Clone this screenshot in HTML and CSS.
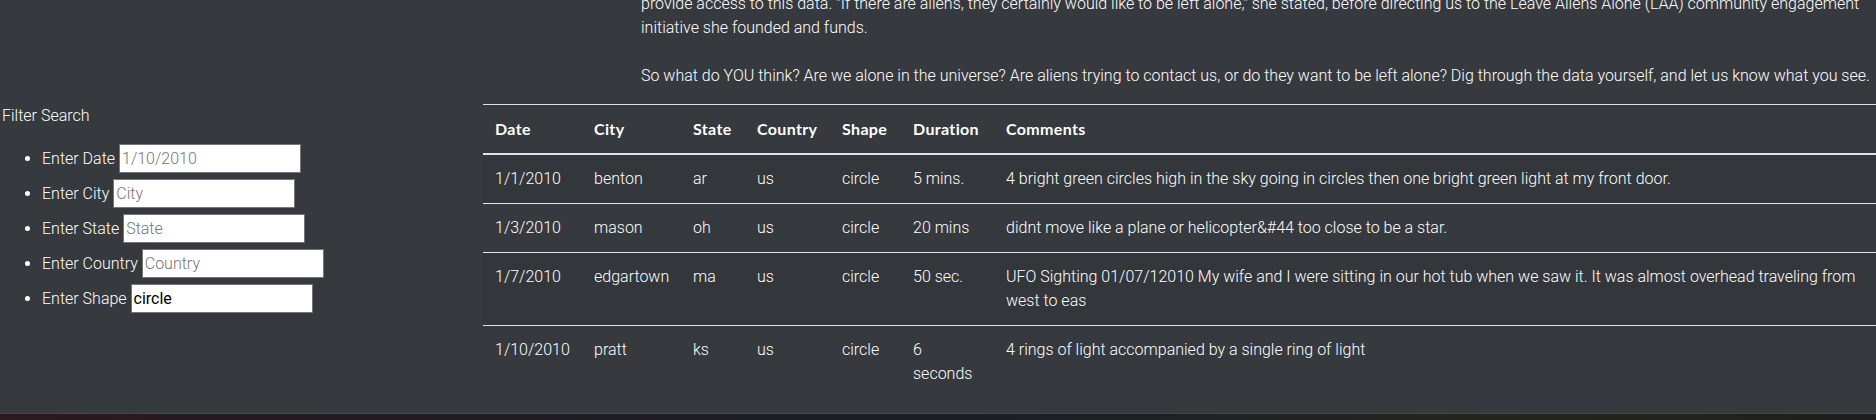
FILE: index.html
```html
<!DOCTYPE html>
<html lang="en">
<head>
<meta charset="utf-8">
<title>UFO Sightings</title>
<link rel="stylesheet" href="styles.css">
</head>
<body>
<div class="page">
  <section class="intro">
    <p class="intro-p">provide access to this data. "If there are aliens, they certainly would like to be left alone," she stated, before directing us to the Leave Aliens Alone (LAA) community engagement<br>initiative she founded and funds.</p>
    <p class="intro-p">So what do YOU think? Are we alone in the universe? Are aliens trying to contact us, or do they want to be left alone? Dig through the data yourself, and let us know what you see.</p>
  </section>
  <div class="main">
    <aside class="filters">
      <div class="filters-title">Filter Search</div>
      <ul class="filter-list">
        <li><label for="datetime">Enter Date</label> <input class="field" id="datetime" type="text" placeholder="1/10/2010"></li>
        <li><label for="city">Enter City</label> <input class="field" id="city" type="text" placeholder="City"></li>
        <li><label for="state">Enter State</label> <input class="field" id="state" type="text" placeholder="State"></li>
        <li><label for="country">Enter Country</label> <input class="field" id="country" type="text" placeholder="Country"></li>
        <li><label for="shape">Enter Shape</label> <input class="field" id="shape" type="text" value="circle"></li>
      </ul>
    </aside>
    <section class="results">
      <table class="ufo-table">
        <colgroup>
          <col class="c-date"><col class="c-city"><col class="c-state"><col class="c-country"><col class="c-shape"><col class="c-duration"><col>
        </colgroup>
        <thead>
          <tr><th>Date</th><th>City</th><th>State</th><th>Country</th><th>Shape</th><th>Duration</th><th>Comments</th></tr>
        </thead>
        <tbody>
          <tr><td>1/1/2010</td><td>benton</td><td>ar</td><td>us</td><td>circle</td><td>5 mins.</td><td>4 bright green circles high in the sky going in circles then one bright green light at my front door.</td></tr>
          <tr><td>1/3/2010</td><td>mason</td><td>oh</td><td>us</td><td>circle</td><td>20 mins</td><td>didnt move like a plane or helicopter&amp;#44 too close to be a star.</td></tr>
          <tr><td>1/7/2010</td><td>edgartown</td><td>ma</td><td>us</td><td>circle</td><td>50 sec.</td><td>UFO Sighting 01/07/12010 My wife and I were sitting in our hot tub when we saw it. It was almost overhead traveling from<br>west to eas</td></tr>
          <tr><td>1/10/2010</td><td>pratt</td><td>ks</td><td>us</td><td>circle</td><td>6<br>seconds</td><td>4 rings of light accompanied by a single ring of light</td></tr>
        </tbody>
      </table>
    </section>
  </div>
</div>
<div class="backdrop"></div>
</body>
</html>
```
FILE: styles.css
```css
html, body {
  margin: 0;
  padding: 0;
}
body {
  height: 420px;
  overflow: hidden;
  background: #1c1d21;
  font-family: Roboto, "Liberation Sans", sans-serif;
  font-weight: 300;
  font-size: 16px;
  line-height: 1.5;
  color: #fff;
}
.page {
  background: #36393e;
  height: 413px;
  overflow: hidden;
}
.intro {
  margin: -8px 0 0 641px;
}
.intro-p {
  margin: 0 0 24px;
  white-space: nowrap;
}
.intro-p:last-child {
  margin-bottom: 16px;
}
.main {
  display: grid;
  grid-template-columns: 483px 1fr;
}
.filters {
  padding-left: 2px;
}
.filters-title {
  line-height: 24px;
}
.filter-list {
  margin: 16px 0 0;
  padding-left: 40px;
  list-style: disc;
}
.filter-list li {
  height: 29px;
  line-height: 29px;
  margin-bottom: 6px;
}
.field {
  box-sizing: border-box;
  width: 182px;
  height: 29px;
  margin: 0;
  padding: 1px 2px;
  border: 1px solid #767676;
  background: #fff;
  color: #000;
  font-family: Roboto, "Liberation Sans", sans-serif;
  font-weight: 400;
  font-size: 16px;
  vertical-align: top;
}
.field::placeholder {
  color: #757575;
  font-weight: 300;
}
.ufo-table {
  width: 1393px;
  table-layout: fixed;
  border-collapse: collapse;
  margin-bottom: 16px;
}
.c-date { width: 99px; }
.c-city { width: 99px; }
.c-state { width: 64px; }
.c-country { width: 85px; }
.c-shape { width: 71px; }
.c-duration { width: 93px; }
.ufo-table th,
.ufo-table td {
  padding: 12px;
  text-align: left;
  vertical-align: top;
  border-top: 1px solid #dee2e6;
  white-space: nowrap;
}
.ufo-table th {
  font-family: Lato, Roboto, sans-serif;
  font-weight: 700;
  letter-spacing: 0.35px;
  border-bottom: 2px solid #dee2e6;
}
.ufo-table tbody tr:nth-child(odd) {
  background: rgba(0, 0, 0, 0.05);
}
.backdrop {
  height: 6px;
  border-top: 1px solid #44474c;
  background: linear-gradient(90deg, #2c1a1f 0%, #231c22 20%, #1d1f26 45%, #1f2024 60%, #25251f 80%, #1e1f1c 100%);
}
```
